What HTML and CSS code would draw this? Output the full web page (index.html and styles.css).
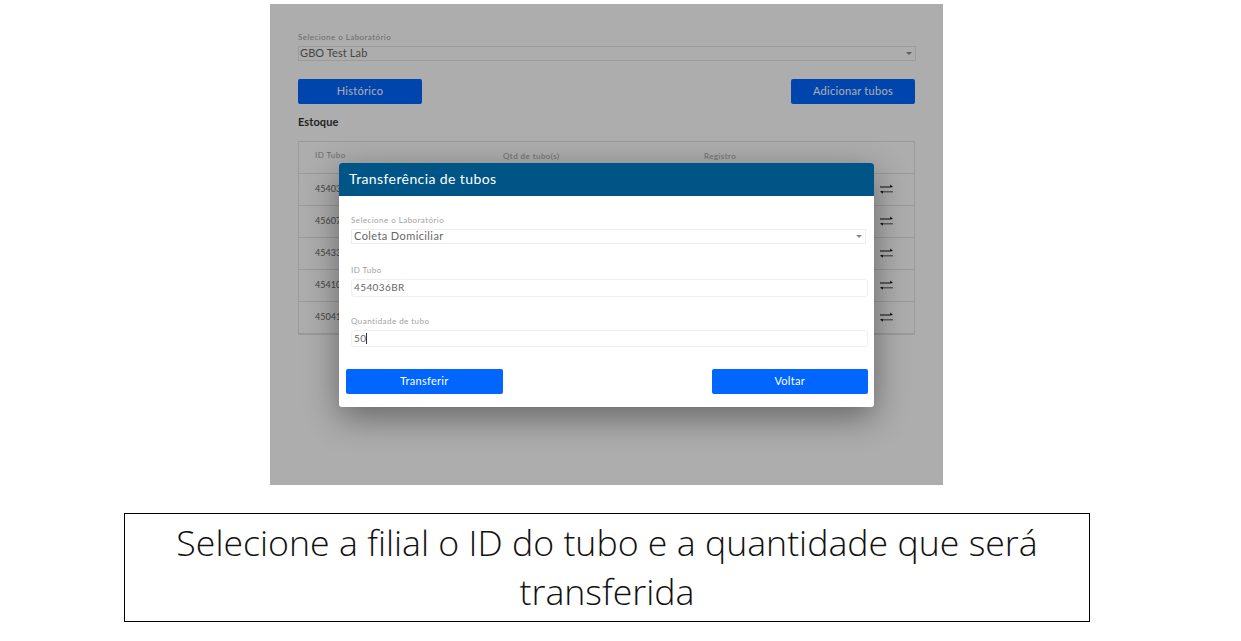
FILE: index.html
```html
<!DOCTYPE html>
<html lang="pt-BR">
<head>
  <meta charset="UTF-8" />
  <title>Transferência de tubos</title>
  <link rel="stylesheet" href="styles.css">
</head>
<body>
  <svg class="defs" width="0" height="0">
    <symbol id="swap" viewBox="0 0 13 11">
      <path d="M0 2.6h10.2V.6L13 3 10.2 3.6H0zM13 7.4H2.8V6.8L0 7.6l2.8 2.2V8.2H13z" fill="#111"/>
    </symbol>
  </svg>

  <div class="shot">
    <div class="page">
      <div class="field-label">Selecione o Laboratório</div>
      <div class="select select-top">GBO Test Lab<span class="caret"></span></div>

      <div class="actions">
        <button class="btn">Histórico</button>
        <button class="btn">Adicionar tubos</button>
      </div>

      <div class="section-title">Estoque</div>

      <div class="table">
        <div class="row row-head">
          <div class="cell-id">ID Tubo</div>
          <div class="cell-qtd">Qtd de tubo(s)</div>
          <div class="cell-reg">Registro</div>
        </div>
        <div class="row">
          <div class="cell-id">454036BR</div><div class="cell-qtd"></div><div class="cell-reg"></div>
          <svg class="swap"><use href="#swap"/></svg>
        </div>
        <div class="row">
          <div class="cell-id">45607</div><div class="cell-qtd"></div><div class="cell-reg"></div>
          <svg class="swap"><use href="#swap"/></svg>
        </div>
        <div class="row">
          <div class="cell-id">45433</div><div class="cell-qtd"></div><div class="cell-reg"></div>
          <svg class="swap"><use href="#swap"/></svg>
        </div>
        <div class="row">
          <div class="cell-id">45410</div><div class="cell-qtd"></div><div class="cell-reg"></div>
          <svg class="swap"><use href="#swap"/></svg>
        </div>
        <div class="row">
          <div class="cell-id">45041</div><div class="cell-qtd"></div><div class="cell-reg"></div>
          <svg class="swap"><use href="#swap"/></svg>
        </div>
      </div>
    </div>

    <div class="overlay"></div>

    <div class="modal">
      <div class="modal-head">Transferência de tubos</div>
      <div class="modal-body">
        <div class="field-label">Selecione o Laboratório</div>
        <div class="select select-modal">Coleta Domiciliar<span class="caret"></span></div>

        <div class="field-label label-gap">ID Tubo</div>
        <div class="input">454036BR</div>

        <div class="field-label label-gap-last">Quantidade de tubo</div>
        <div class="input input-last">50<span class="cursor"></span></div>

        <div class="modal-actions">
          <button class="btn btn-modal">Transferir</button>
          <button class="btn btn-modal">Voltar</button>
        </div>
      </div>
    </div>
  </div>

  <div class="caption">Selecione a filial o ID do tubo e a quantidade que será transferida</div>
</body>
</html>
```

FILE: styles.css
```css
body {
  margin: 0;
  background: #fff;
  font-family: "Lato", sans-serif;
  overflow: hidden;
}

.defs {
  position: absolute;
}

.shot {
  position: relative;
  width: 673px;
  height: 481px;
  margin: 4px 0 0 270px;
  overflow: hidden;
  background: #fff;
}

.page {
  padding: 28px 28px 0;
}

.field-label {
  font-size: 8px;
  line-height: 10px;
  color: #a0a0a0;
  letter-spacing: 0.45px;
}

.select {
  position: relative;
  box-sizing: border-box;
  border: 1px solid #e6e6e6;
  color: #666;
  font-size: 11px;
  letter-spacing: 0.4px;
}

.select-top {
  width: 618px;
  height: 15px;
  margin-top: 4px;
  padding-left: 1px;
  line-height: 12px;
  letter-spacing: 0.1px;
}

.caret {
  position: absolute;
  right: 3px;
  top: 5px;
  border-left: 3.5px solid transparent;
  border-right: 3.5px solid transparent;
  border-top: 3px solid #888;
}

.actions {
  display: flex;
  justify-content: space-between;
  width: 617px;
  margin-top: 18px;
}

.btn {
  width: 124px;
  height: 25px;
  padding: 0 0 2px;
  border: none;
  border-radius: 2px;
  background: #0066ff;
  color: #fff;
  font-family: inherit;
  font-size: 11px;
  letter-spacing: 0.3px;
}

.section-title {
  margin-top: 11px;
  font-size: 11px;
  line-height: 14px;
  font-weight: 700;
  color: #333;
  letter-spacing: 0.1px;
}

.table {
  width: 617px;
  margin-top: 12px;
  border: 1px solid #e4e4e4;
  border-bottom-width: 2px;
  box-sizing: border-box;
}

.row {
  display: flex;
  align-items: center;
  height: 32px;
  border-top: 1px solid #e4e4e4;
  box-sizing: border-box;
  font-size: 9px;
  color: #666;
}

.row-head {
  border-top: none;
  height: 31px;
  padding-bottom: 4px;
  font-size: 8px;
  color: #a0a0a0;
  letter-spacing: 0.45px;
}

.cell-id {
  width: 204px;
  flex: none;
  padding: 0 0 2px 16px;
  box-sizing: border-box;
  white-space: nowrap;
}

.cell-qtd {
  width: 201px;
  flex: none;
}

.cell-reg {
  width: 176px;
  flex: none;
}

.swap {
  width: 13px;
  height: 11px;
  flex: none;
}

.overlay {
  position: absolute;
  inset: 0;
  background: rgba(0, 0, 0, 0.32);
}

.modal {
  position: absolute;
  left: 69px;
  top: 159px;
  width: 535px;
  height: 244px;
  border-radius: 3px;
  background: #fff;
  box-shadow: 0 10px 34px rgba(0, 0, 0, 0.42);
}

.modal-head {
  height: 33px;
  padding-left: 10px;
  border-radius: 3px 3px 0 0;
  background: #005587;
  color: #fff;
  font-size: 14px;
  line-height: 32px;
  letter-spacing: 0.4px;
}

.modal-body {
  padding: 19px 6px 0 7px;
}

.modal-body .field-label {
  margin-left: 5px;
}

.label-gap {
  margin-top: 21px;
}

.modal-body .label-gap-last {
  margin-top: 19px;
}

.select-modal {
  width: 515px;
  height: 15px;
  margin: 4px 0 0 5px;
  padding-left: 2px;
  border-color: #eee;
  line-height: 12px;
}

.input {
  box-sizing: border-box;
  width: 517px;
  height: 18px;
  margin: 4px 0 0 5px;
  padding-left: 2px;
  border: 1px solid #f0f0f0;
  border-radius: 3px;
  color: #666;
  font-size: 10px;
  line-height: 15px;
  letter-spacing: 0.4px;
}

.input-last {
  height: 17px;
  line-height: 14px;
}

.cursor {
  display: inline-block;
  width: 1px;
  height: 11px;
  background: #333;
  vertical-align: -2px;
}

.modal-actions {
  display: flex;
  justify-content: space-between;
  margin-top: 22px;
}

.btn-modal {
  width: 156.5px;
}

.caption {
  box-sizing: border-box;
  width: 966px;
  height: 109px;
  margin: 28px 0 0 124px;
  padding: 4px 40px 0;
  border: 1px solid #000;
  font-family: "Open Sans", sans-serif;
  font-weight: 300;
  font-size: 35.7px;
  line-height: 49px;
  color: #111;
  text-align: center;
}
```
